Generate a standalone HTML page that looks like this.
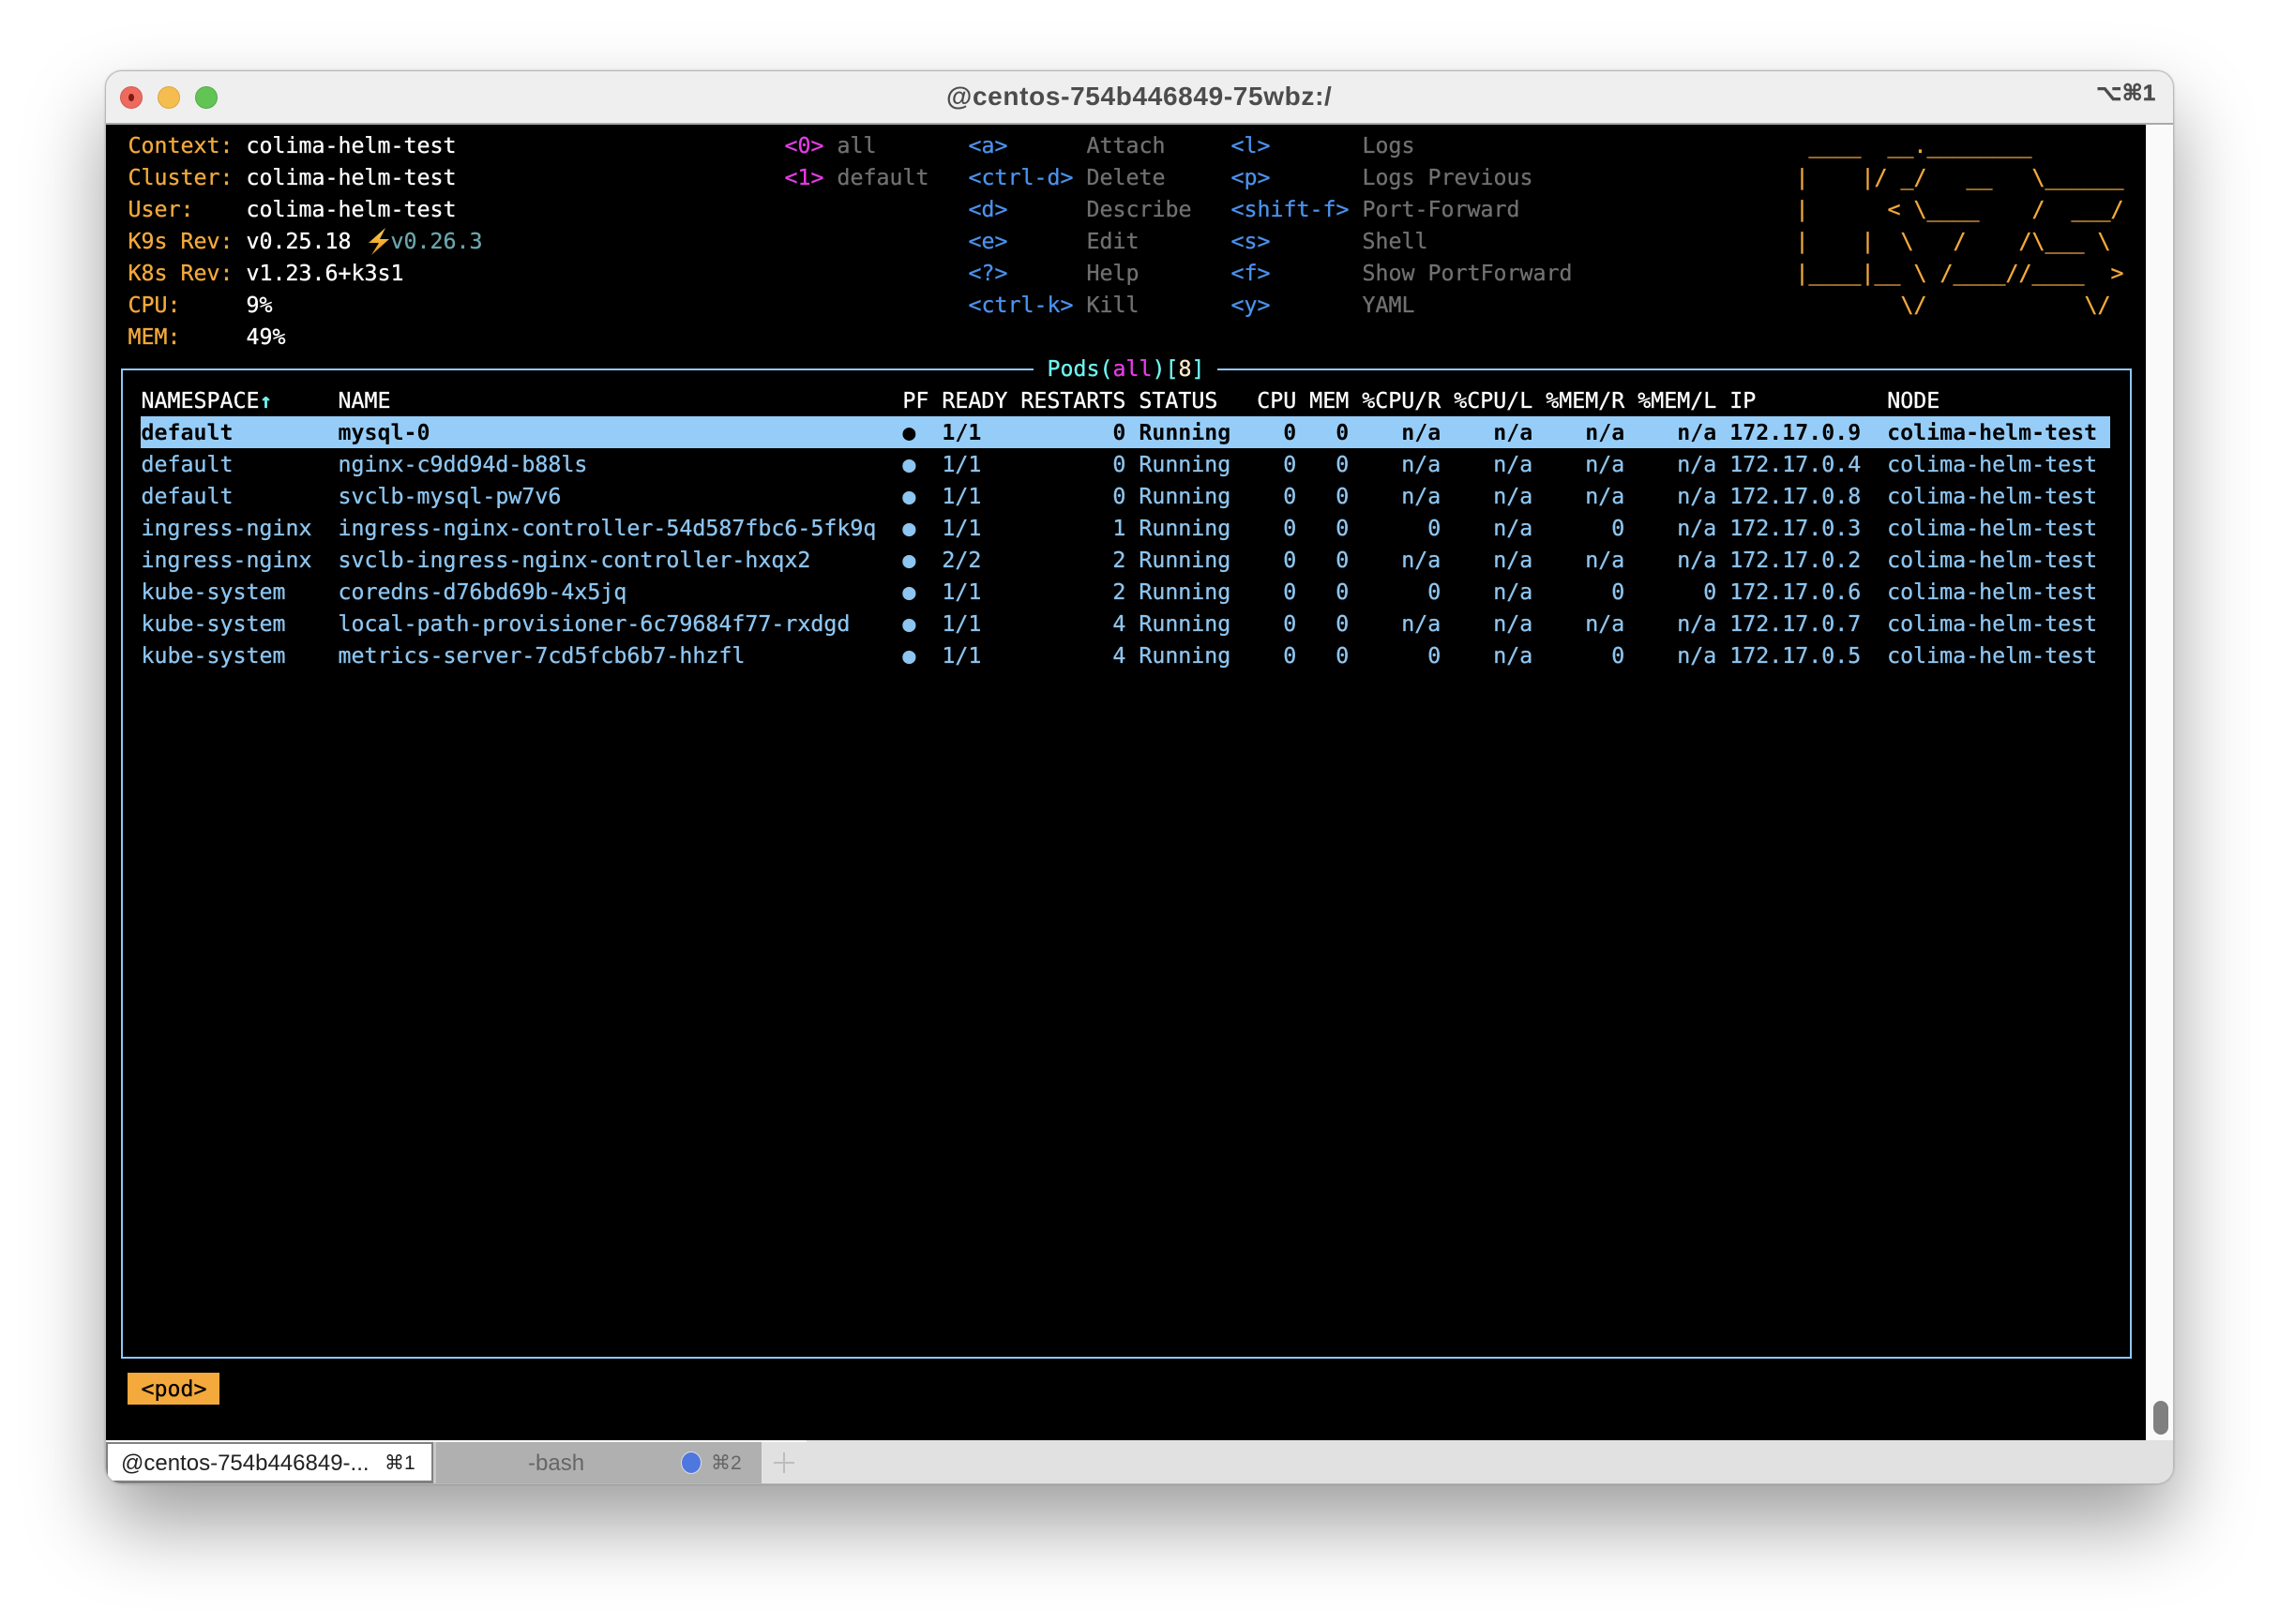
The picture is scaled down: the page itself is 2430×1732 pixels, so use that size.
<!DOCTYPE html>
<html>
<head>
<meta charset="utf-8">
<title>k9s</title>
<style>
html,body{margin:0;padding:0;background:#fff;width:2430px;height:1732px;overflow:hidden}
#shadow{position:absolute;left:112px;top:75px;width:2206px;height:1508px;border-radius:18px;box-shadow:0 0 2px rgba(0,0,0,.22),0 42px 84px rgba(0,0,0,.38)}
#win{position:absolute;left:112px;top:75px;width:2206px;height:1508px;border-radius:18px;overflow:hidden;background:#e1e1e1}
#g{position:absolute;left:-112px;top:-75px;width:2430px;height:1732px}
#g div,#g pre,#g svg{position:absolute;margin:0}
#edge{position:absolute;left:112px;top:75px;width:2206px;height:1508px;border-radius:18px;box-sizing:border-box;border:1px solid #b8b8b8;pointer-events:none}
pre{font-family:"DejaVu Sans Mono","Liberation Mono",monospace;font-size:23.25px;line-height:34px;white-space:pre;color:#fff;text-rendering:geometricPrecision;-webkit-text-stroke:.3px}
.o{color:#f3a93b}.w{color:#fff}.m{color:#e43de6}.b{color:#4b92ec}.g{color:#707070}.t{color:#8dc5f0}
.ui{font-family:"Liberation Sans","DejaVu Sans",sans-serif;white-space:pre}
</style>
</head>
<body>
<div id="shadow"></div>
<div id="win"><div id="g">
  <div style="left:112px;top:75px;width:2206px;height:56px;background:#efefef"></div>
  <div style="left:112px;top:131px;width:2206px;height:2px;background:#a9a9a9"></div>
  <div style="left:128px;top:92px;width:24px;height:24px;border-radius:50%;background:#ee6a5f;box-sizing:border-box;border:1px solid #d9574c"></div>
  <div style="left:137px;top:100px;width:6px;height:8px;border-radius:50%;background:#7e1810"></div>
  <div style="left:168px;top:92px;width:24px;height:24px;border-radius:50%;background:#f5bd4f;box-sizing:border-box;border:1px solid #dca540"></div>
  <div style="left:208px;top:92px;width:24px;height:24px;border-radius:50%;background:#61c454;box-sizing:border-box;border:1px solid #52ad46"></div>
  <div class="ui" style="left:1009px;top:87px;font-size:28px;letter-spacing:.65px;line-height:32px;font-weight:bold;color:#4c4c4c">@centos-754b446849-75wbz:/</div>
  <div class="ui" style="left:2235px;top:84px;font-size:24px;line-height:32px;font-weight:bold;color:#4c4c4c;-webkit-text-stroke:.5px #4c4c4c">⌥⌘1</div>

  <div style="left:112px;top:133px;width:2176px;height:1403px;background:#000"></div>
  <div style="left:2288px;top:133px;width:30px;height:1403px;background:#fafafa"></div>
  <div style="left:2296px;top:1494px;width:16px;height:36px;border-radius:8px;background:#808080"></div>

  <pre style="left:136.5px;top:139px"><span class="o">Context:</span> colima-helm-test
<span class="o">Cluster:</span> colima-helm-test
<span class="o">User:</span>    colima-helm-test
<span class="o">K9s Rev:</span> v0.25.18   <span style="color:#6aa6ac">v0.26.3</span>
<span class="o">K8s Rev:</span> v1.23.6+k3s1
<span class="o">CPU:</span>     9%
<span class="o">MEM:</span>     49%</pre>
  <svg style="left:390px;top:240px" width="28" height="35" viewBox="390 240 28 35"><defs><linearGradient id="bolt" x1="0" y1="0" x2="0" y2="1"><stop offset="0" stop-color="#f9cf4a"/><stop offset="1" stop-color="#ee8f22"/></linearGradient></defs><polygon points="411,243 393,259 404,259 396,272 415,255 405,255" fill="url(#bolt)"/></svg>

  <pre class="m" style="left:836.5px;top:139px">&lt;0&gt;
&lt;1&gt;</pre>
  <pre class="g" style="left:892.5px;top:139px">all
default</pre>
  <pre class="b" style="left:1032.5px;top:139px">&lt;a&gt;
&lt;ctrl-d&gt;
&lt;d&gt;
&lt;e&gt;
&lt;?&gt;
&lt;ctrl-k&gt;</pre>
  <pre class="g" style="left:1158.5px;top:139px">Attach
Delete
Describe
Edit
Help
Kill</pre>
  <pre class="b" style="left:1312.5px;top:139px">&lt;l&gt;
&lt;p&gt;
&lt;shift-f&gt;
&lt;s&gt;
&lt;f&gt;
&lt;y&gt;</pre>
  <pre class="g" style="left:1452.5px;top:139px">Logs
Logs Previous
Port-Forward
Shell
Show PortForward
YAML</pre>
  <pre class="o" style="left:1914.5px;top:139px"> ____  __.________
|    |/ _/   __   \______
|      &lt; \____    /  ___/
|    |  \   /    /\___ \
|____|__ \ /____//____  &gt;
        \/            \/</pre>

  <div style="left:129px;top:393px;width:2140px;height:1052px;box-sizing:content-box;border:2px solid #8fc8f5"></div>
  <div style="left:1102px;top:385px;width:196px;height:18px;background:#000"></div>
  <pre style="left:1116.5px;top:377px;color:#6ff3ee">Pods(<span class="m">all</span>)[<span style="color:#fbe9c8">8</span>]</pre>

  <div style="left:150px;top:444px;width:2100px;height:34px;background:#96cdf8"></div>
  <pre class="t" style="left:122.5px;top:411px"><span class="w">  NAMESPACE<span style="display:inline-block;width:14px;color:#6ff3ee;font-size:22px;font-weight:bold;text-align:center;line-height:20px">↑</span>     NAME                                       PF READY RESTARTS STATUS   CPU MEM %CPU/R %CPU/L %MEM/R %MEM/L IP          NODE</span>
<span style="color:#000;font-weight:bold;-webkit-text-stroke:0">  default        mysql-0                                    ●  1/1          0 Running    0   0    n/a    n/a    n/a    n/a 172.17.0.9  colima-helm-test</span>
  default        nginx-c9dd94d-b88ls                        ●  1/1          0 Running    0   0    n/a    n/a    n/a    n/a 172.17.0.4  colima-helm-test
  default        svclb-mysql-pw7v6                          ●  1/1          0 Running    0   0    n/a    n/a    n/a    n/a 172.17.0.8  colima-helm-test
  ingress-nginx  ingress-nginx-controller-54d587fbc6-5fk9q  ●  1/1          1 Running    0   0      0    n/a      0    n/a 172.17.0.3  colima-helm-test
  ingress-nginx  svclb-ingress-nginx-controller-hxqx2       ●  2/2          2 Running    0   0    n/a    n/a    n/a    n/a 172.17.0.2  colima-helm-test
  kube-system    coredns-d76bd69b-4x5jq                     ●  1/1          2 Running    0   0      0    n/a      0      0 172.17.0.6  colima-helm-test
  kube-system    local-path-provisioner-6c79684f77-rxdgd    ●  1/1          4 Running    0   0    n/a    n/a    n/a    n/a 172.17.0.7  colima-helm-test
  kube-system    metrics-server-7cd5fcb6b7-hhzfl            ●  1/1          4 Running    0   0      0    n/a      0    n/a 172.17.0.5  colima-helm-test</pre>

  <div style="left:136px;top:1464px;width:98px;height:34px;background:#f3a93b"></div>
  <pre style="left:150.5px;top:1465px;color:#000">&lt;pod&gt;</pre>

  <div style="left:112px;top:1536px;width:2206px;height:47px;background:#e1e1e1"></div>
  <div style="left:112px;top:1536px;width:748px;height:2px;background:#fafafa"></div>
  <div style="left:113px;top:1538px;width:349px;height:44px;box-sizing:border-box;background:#fff;border:2px solid #808080;border-top-width:2px;border-bottom-width:3px"></div>
  <div style="left:462px;top:1538px;width:3px;height:44px;background:#c8c8c8"></div>
  <div style="left:465px;top:1538px;width:347px;height:44px;background:#b0b0b0"></div>
  <div class="ui" style="left:129px;top:1547px;font-size:24px;line-height:28px;color:#222">@centos-754b446849-...</div>
  <div class="ui" style="left:410px;top:1547px;font-size:21px;line-height:28px;color:#222">⌘1</div>
  <div class="ui" style="left:563px;top:1547px;font-size:24px;line-height:28px;color:#666">-bash</div>
  <div style="left:727px;top:1549px;width:20px;height:22px;border-radius:50%;background:#4f77e0;box-shadow:0 0 0 1px #ddd"></div>
  <div class="ui" style="left:758px;top:1547px;font-size:21px;line-height:28px;color:#666">⌘2</div>
  <div style="left:825px;top:1559px;width:22px;height:2px;background:#bdbdbd"></div>
  <div style="left:835px;top:1549px;width:2px;height:22px;background:#bdbdbd"></div>
</div></div>
<div id="edge"></div>
</body>
</html>
